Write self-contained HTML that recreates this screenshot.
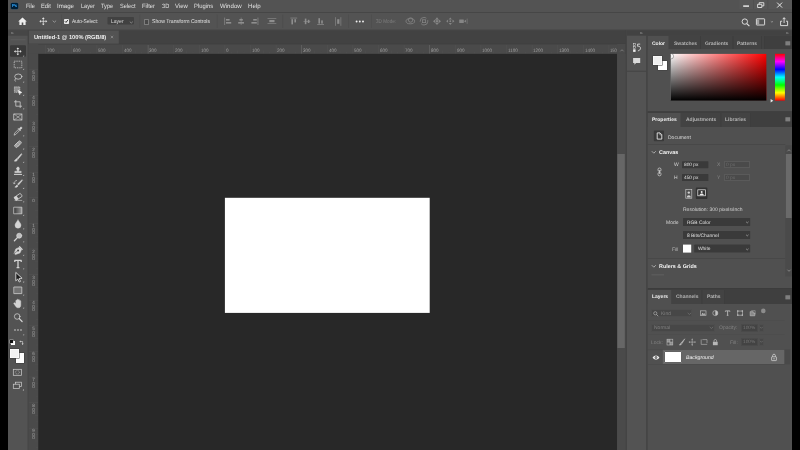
<!DOCTYPE html>
<html><head><meta charset="utf-8"><title>Photoshop</title>
<style>
html,body{margin:0;padding:0;}
body{width:800px;height:450px;background:#000;position:relative;overflow:hidden;font-family:"Liberation Sans",sans-serif;}
#a{position:absolute;left:0;top:0;width:800px;height:450px;will-change:transform;}
#a>div,#a>span,#a>svg{position:absolute;display:block;}
#a>span{white-space:nowrap;}
svg{overflow:visible;}
</style></head><body><div id="a">
<svg style="left:8px;top:0px" width="784" height="450"><rect x="0.00" y="0.00" width="784.00" height="450.00" rx="0" fill="#535353"/></svg>
<svg style="left:8px;top:0px" width="784" height="13"><rect x="0.00" y="0.00" width="784.00" height="12.30" rx="0" fill="#535353"/></svg>
<svg style="left:8px;top:12px" width="784" height="1"><rect x="0.00" y="0.10" width="784.00" height="0.70" rx="0" fill="#3e3e3e"/></svg>
<div style="left:11.1px;top:2.9px;width:7px;height:6.2px;background:#001e36;border-radius:1.2px;box-shadow:0 0 0 0.3px #0b3f66"></div>
<span style="left:12.2px;top:3.8px;font-size:4.4px;color:#31a8ff;line-height:4.4px;transform-origin:0 0;transform:rotate(0.03deg) scaleX(1);font-weight:bold;letter-spacing:-0.1px;">Ps</span>
<span style="left:25.6px;top:2.95px;font-size:6.1px;color:#e0e0e0;line-height:6.1px;transform-origin:0 0;transform:rotate(0.03deg) scaleX(0.9);">File</span>
<span style="left:41.2px;top:2.95px;font-size:6.1px;color:#e0e0e0;line-height:6.1px;transform-origin:0 0;transform:rotate(0.03deg) scaleX(0.95);">Edit</span>
<span style="left:57px;top:2.95px;font-size:6.1px;color:#e0e0e0;line-height:6.1px;transform-origin:0 0;transform:rotate(0.03deg) scaleX(1.0);">Image</span>
<span style="left:80.6px;top:2.95px;font-size:6.1px;color:#e0e0e0;line-height:6.1px;transform-origin:0 0;transform:rotate(0.03deg) scaleX(0.91);">Layer</span>
<span style="left:101px;top:2.95px;font-size:6.1px;color:#e0e0e0;line-height:6.1px;transform-origin:0 0;transform:rotate(0.03deg) scaleX(0.92);">Type</span>
<span style="left:120px;top:2.95px;font-size:6.1px;color:#e0e0e0;line-height:6.1px;transform-origin:0 0;transform:rotate(0.03deg) scaleX(0.92);">Select</span>
<span style="left:141.9px;top:2.95px;font-size:6.1px;color:#e0e0e0;line-height:6.1px;transform-origin:0 0;transform:rotate(0.03deg) scaleX(0.96);">Filter</span>
<span style="left:161.5px;top:2.95px;font-size:6.1px;color:#e0e0e0;line-height:6.1px;transform-origin:0 0;transform:rotate(0.03deg) scaleX(0.93);">3D</span>
<span style="left:175px;top:2.95px;font-size:6.1px;color:#e0e0e0;line-height:6.1px;transform-origin:0 0;transform:rotate(0.03deg) scaleX(0.97);">View</span>
<span style="left:193.7px;top:2.95px;font-size:6.1px;color:#e0e0e0;line-height:6.1px;transform-origin:0 0;transform:rotate(0.03deg) scaleX(0.96);">Plugins</span>
<span style="left:220px;top:2.95px;font-size:6.1px;color:#e0e0e0;line-height:6.1px;transform-origin:0 0;transform:rotate(0.03deg) scaleX(1.0);">Window</span>
<span style="left:247.9px;top:2.95px;font-size:6.1px;color:#e0e0e0;line-height:6.1px;transform-origin:0 0;transform:rotate(0.03deg) scaleX(1.0);">Help</span>
<svg style="left:739px;top:0px" width="53" height="9"><rect x="0.40" y="0.00" width="52.60" height="9.00" rx="0" fill="#575757"/></svg>
<svg style="left:753px;top:0px" width="1" height="9"><rect x="0.40" y="0.00" width="0.60" height="9.00" rx="0" fill="#4c4c4c"/></svg>
<svg style="left:767px;top:0px" width="2" height="9"><rect x="0.60" y="0.00" width="0.60" height="9.00" rx="0" fill="#4c4c4c"/></svg>
<svg style="left:739px;top:0px;" width="53" height="9" viewBox="0 0 53 9"><g stroke="#e6e6e6" fill="none" stroke-width="1">
<path d="M4.2 6.1H10" stroke-width="1.5"/>
<path d="M18.6 4.3h4.2v3.2h-4.2z M20.2 4.2V2.7h4.6v3.2h-1.8" stroke-width="0.9"/>
<path d="M38.1 2.6l5 5M43.1 2.6l-5 5" stroke-width="1"/>
</g></svg>
<svg style="left:8px;top:12px" width="784" height="18"><rect x="0.00" y="0.80" width="784.00" height="17.20" rx="0" fill="#535353"/></svg>
<svg style="left:8px;top:29px" width="784" height="2"><rect x="0.00" y="0.60" width="784.00" height="0.60" rx="0" fill="#444"/></svg>
<svg style="left:17.6px;top:17px;" width="9" height="9" viewBox="0 0 9 9"><path d="M4.5 0.6L0.2 4.4h1.2V8.1h2.3V5.5h1.6V8.1h2.3V4.4h1.2z" fill="#eeeeee"/></svg>
<svg style="left:38px;top:16px;" width="12" height="11" viewBox="0 0 12 11"><g transform="translate(5.3,5.3) scale(0.92)" stroke="#e4e4e4" stroke-width="0.8" fill="#e4e4e4">
<path d="M0 -3V3M-3 0H3" fill="none"/>
<path d="M0 -4.3l-1.5 1.7h3zM0 4.3l-1.5 -1.7h3zM-4.3 0l1.7 -1.5v3zM4.3 0l-1.7 -1.5v3z" stroke="none"/></g></svg>
<svg style="left:51.6px;top:20.2px;" width="5" height="4" viewBox="0 0 5 4"><path d="M0.7 0.7L2.4 2.2 4.1 0.7" stroke="#a4a4a4" stroke-width="0.8" fill="none"/></svg>
<svg style="left:61px;top:14px" width="1" height="14"><rect x="0.00" y="0.50" width="0.60" height="13.50" rx="0" fill="#4b4b4b"/></svg>
<div style="left:64.2px;top:19px;width:4.6px;height:4.6px;border-radius:0.8px;background:#e8e8e8"></div>
<svg style="left:64.2px;top:19px;" width="4.6" height="4.6" viewBox="0 0 4.6 4.6"><path d="M0.9 2.3l1.1 1.1L3.8 1.1" stroke="#2e2e2e" stroke-width="1" fill="none"/></svg>
<span style="left:72.2px;top:19.1px;font-size:5.6px;color:#e0e0e0;line-height:5.6px;transform-origin:0 0;transform:rotate(0.03deg) scaleX(0.86);">Auto-Select:</span>
<svg style="left:107px;top:16px" width="27" height="9"><rect x="0.50" y="0.90" width="26.50" height="7.60" rx="0.8" fill="#414141"/></svg>
<span style="left:111px;top:19.1px;font-size:5.6px;color:#d8d8d8;line-height:5.6px;transform-origin:0 0;transform:rotate(0.03deg) scaleX(0.9);">Layer</span>
<svg style="left:128.8px;top:20.6px;" width="5" height="4" viewBox="0 0 5 4"><path d="M0.8 0.7L2.3 2 3.8 0.7" stroke="#b0b0b0" stroke-width="0.6" fill="none"/></svg>
<svg style="left:139px;top:14px" width="2" height="14"><rect x="0.60" y="0.50" width="0.60" height="13.50" rx="0" fill="#4b4b4b"/></svg>
<div style="left:143.9px;top:19.3px;width:3.5px;height:3.5px;border:0.45px solid #7c7c7c;border-radius:0.6px;background:#474747;box-sizing:content-box"></div>
<span style="left:151.5px;top:19.1px;font-size:5.6px;color:#e0e0e0;line-height:5.6px;transform-origin:0 0;transform:rotate(0.03deg) scaleX(0.92);">Show Transform Controls</span>
<svg style="left:216px;top:14px" width="2" height="14"><rect x="0.80" y="0.50" width="0.60" height="13.50" rx="0" fill="#4b4b4b"/></svg>
<svg style="left:0px;top:0px;pointer-events:none;" width="800" height="30" viewBox="0 0 800 30"><g fill="#8e8e8e"><rect x="224.4" y="17.6" width="0.7" height="7.4"/><rect x="226" y="19" width="3.6" height="1.6"/><rect x="226" y="22" width="5.2" height="1.6"/></g><g fill="#8e8e8e"><rect x="240.8" y="17.6" width="0.6" height="7.4"/><rect x="239.4" y="19" width="3.4" height="1.6"/><rect x="238.2" y="22" width="5.8" height="1.6"/></g><g fill="#8e8e8e"><rect x="257.6" y="17.6" width="0.7" height="7.4"/><rect x="253.2" y="19" width="3.6" height="1.6"/><rect x="251.4" y="22" width="5.4" height="1.6"/></g><g fill="#8e8e8e"><rect x="267.5" y="18.2" width="8.8" height="0.6"/><rect x="267.5" y="23.4" width="8.8" height="0.6"/><rect x="269.3" y="20" width="5.2" height="2.2"/></g><g fill="#8e8e8e"><rect x="290.4" y="17.7" width="6.8" height="0.7"/><rect x="291.4" y="19.2" width="1.6" height="5.2"/><rect x="294.4" y="19.2" width="1.6" height="3.2"/></g><g fill="#8e8e8e"><rect x="303.5" y="21" width="6.8" height="0.6"/><rect x="304.8" y="18.6" width="1.6" height="5.6"/><rect x="307.8" y="19.8" width="1.6" height="3.2"/></g><g fill="#8e8e8e"><rect x="317.2" y="24.3" width="6.8" height="0.7"/><rect x="318.4" y="18.2" width="1.6" height="5.4"/><rect x="321.2" y="20.4" width="1.6" height="3.2"/></g><g fill="#8e8e8e"><rect x="335.2" y="17.2" width="0.6" height="8.6"/><rect x="340.6" y="17.2" width="0.6" height="8.6"/><rect x="337.2" y="19.2" width="2.2" height="4.6"/></g></svg>
<svg style="left:282px;top:14px" width="2" height="14"><rect x="0.50" y="0.50" width="0.60" height="13.50" rx="0" fill="#4b4b4b"/></svg>
<svg style="left:348px;top:14px" width="1" height="14"><rect x="0.00" y="0.50" width="0.60" height="13.50" rx="0" fill="#4b4b4b"/></svg>
<svg style="left:354px;top:19px;" width="12" height="5" viewBox="0 0 12 5"><g fill="#f0f0f0"><circle cx="2.6" cy="2.5" r="0.95"/><circle cx="5.8" cy="2.5" r="0.95"/><circle cx="9" cy="2.5" r="0.95"/></g></svg>
<svg style="left:371px;top:14px" width="1" height="14"><rect x="0.00" y="0.50" width="0.60" height="13.50" rx="0" fill="#4b4b4b"/></svg>
<span style="left:376.3px;top:19.1px;font-size:5.6px;color:#7d7d7d;line-height:5.6px;transform-origin:0 0;transform:rotate(0.03deg) scaleX(0.83);">3D Mode:</span>
<svg style="left:400px;top:14px;" width="72" height="14" viewBox="0 0 72 14"><g stroke="#858585" fill="none" stroke-width="0.8">
<ellipse cx="10.3" cy="7.2" rx="4.3" ry="2.6"/><circle cx="10.6" cy="6" r="2.2"/>
<circle cx="24" cy="7.2" r="3.8" stroke-dasharray="9 2"/><rect x="22.4" y="5.8" width="3.2" height="2.8"/>
</g>
<g fill="#858585"><path d="M37 3.3l2 2.4h-4zM37 11.1l2-2.4h-4zM33 7.2l2.4-2v4zM41 7.2l-2.4-2v4z"/><rect x="36" y="6.2" width="2" height="2"/>
<path d="M50.3 3.5l1.6 1.9h-3.2zM50.3 10.9l1.6-1.9h-3.2zM46.2 7.2l1.9-1.6v3.2zM54.4 7.2l-1.9-1.6v3.2z"/><circle cx="50.3" cy="7.2" r="0.9"/>
<rect x="59.2" y="5.4" width="4.6" height="3.6" rx="0.5"/><path d="M64 7.2l2-1.4v2.8z"/><rect x="66.8" y="4.6" width="0.6" height="5.2"/></g></svg>
<svg style="left:740px;top:15.5px;" width="52" height="12" viewBox="0 0 52 12"><g stroke="#e6e6e6" fill="none" stroke-width="0.9">
<circle cx="4.8" cy="5.6" r="2.7"/><path d="M6.8 7.6l2.6 2.6" stroke-width="1.1"/>
<rect x="16.4" y="2.8" width="8.2" height="6.2" rx="0.4"/>
<path d="M30.8 5.3l1.1 0.9 1.1-0.9" stroke="#bdbdbd" stroke-width="0.6"/>
<path d="M42.2 5.2h-1.6v4.4h7v-4.4H46"/><path d="M44.1 7V1.8M42.7 3.2l1.4-1.5 1.4 1.5"/>
</g><rect x="17" y="3.4" width="2.2" height="5" fill="#a0a0a0"/></svg>
<svg style="left:28px;top:30px" width="598" height="14"><rect x="0.00" y="0.20" width="598.00" height="13.80" rx="0" fill="#424242"/></svg>
<svg style="left:28px;top:30px" width="91" height="14"><rect x="0.80" y="0.60" width="90.00" height="13.40" rx="0" fill="#535353"/></svg>
<span style="left:33.8px;top:34.6px;font-size:5.7px;color:#f0f0f0;line-height:5.7px;transform-origin:0 0;transform:rotate(0.03deg) scaleX(1);font-weight:bold;">Untitled-1 @ 100% (RGB/8)</span>
<svg style="left:109.5px;top:35px;" width="4" height="4" viewBox="0 0 4 4"><path d="M0.8 0.8l2.4 2.4M3.2 0.8L0.8 3.2" stroke="#a0a0a0" stroke-width="0.6"/></svg>
<svg style="left:8px;top:30px" width="20" height="6"><rect x="0.00" y="0.20" width="20.00" height="5.60" rx="0" fill="#464646"/></svg>
<svg style="left:10.8px;top:31.9px;" width="3" height="3" viewBox="0 0 3 3"><path d="M0.3 0.3l0.8 0.8-0.8 0.8M1.5 0.3l0.8 0.8-0.8 0.8" stroke="#b8b8b8" stroke-width="0.5" fill="none"/></svg>
<svg style="left:8px;top:35px" width="20" height="415"><rect x="0.00" y="0.80" width="20.00" height="414.20" rx="0" fill="#535353"/></svg>
<svg style="left:27px;top:30px" width="2" height="421"><rect x="0.60" y="0.20" width="1.20" height="420.00" rx="0" fill="#444"/></svg>
<svg style="left:10px;top:39px" width="16" height="2"><rect x="0.50" y="0.00" width="15.00" height="1.40" rx="0" fill="#5a5a5a"/></svg>
<svg style="left:10px;top:45px" width="16" height="12"><rect x="0.00" y="0.30" width="16.00" height="11.40" rx="1.0" fill="#393939"/></svg>
<svg style="left:0px;top:0px;pointer-events:none;" width="30" height="450" viewBox="0 0 30 450"><g transform="translate(18.0,51.4)" stroke="#d4d4d4" fill="none" stroke-width="0.75" stroke-linecap="round" stroke-linejoin="round"><g transform="translate(-0.2,0) scale(0.88)" stroke="#e4e4e4" stroke-width="0.8" fill="#e4e4e4">
<path d="M0 -3V3M-3 0H3" fill="none"/>
<path d="M0 -4.3l-1.5 1.7h3zM0 4.3l-1.5 -1.7h3zM-4.3 0l1.7 -1.5v3zM4.3 0l-1.7 -1.5v3z" stroke="none"/></g></g><path d="M24.1 56.6h-1.3l1.3-1.3z" fill="#c8c8c8"/><g transform="translate(18.0,64.5)" stroke="#d4d4d4" fill="none" stroke-width="0.75" stroke-linecap="round" stroke-linejoin="round"><rect x="-3.8" y="-3.3" width="7.6" height="6.6" stroke-dasharray="1.3 0.9" stroke-linecap="butt"/></g><path d="M24.1 69.7h-1.3l1.3-1.3z" fill="#c8c8c8"/><g transform="translate(18.0,77.4)" stroke="#d4d4d4" fill="none" stroke-width="0.75" stroke-linecap="round" stroke-linejoin="round"><ellipse cx="0.3" cy="-0.8" rx="3.6" ry="2.6"/><path d="M-2.3 1.2c-1 0.6-1.2 1.8-0.4 2.6"/></g><path d="M24.1 82.60000000000001h-1.3l1.3-1.3z" fill="#c8c8c8"/><g transform="translate(18.0,90.5)" stroke="#d4d4d4" fill="none" stroke-width="0.75" stroke-linecap="round" stroke-linejoin="round"><rect x="-3.6" y="-3.6" width="5.4" height="5.4" stroke-dasharray="1.2 0.7" stroke-linecap="butt" fill="#d4d4d4" fill-opacity="0.45"/><path d="M0.2 -0.2l3.8 2.2-1.6 0.5-0.6 1.6z" fill="#f4f4f4" stroke="#f4f4f4" stroke-width="0.4"/></g><path d="M24.1 95.7h-1.3l1.3-1.3z" fill="#c8c8c8"/><g transform="translate(18.0,104)" stroke="#d4d4d4" fill="none" stroke-width="0.75" stroke-linecap="round" stroke-linejoin="round"><path d="M-2.2 -4v6.2h6.2M-4 -2.2h6.2v6.2" stroke-linecap="butt"/></g><path d="M24.1 109.2h-1.3l1.3-1.3z" fill="#c8c8c8"/><g transform="translate(18.0,117)" stroke="#d4d4d4" fill="none" stroke-width="0.75" stroke-linecap="round" stroke-linejoin="round"><rect x="-3.9" y="-3" width="7.8" height="6"/><path d="M-3.9 -3l7.8 6M3.9 -3l-7.8 6" stroke-width="0.55"/></g><g transform="translate(18.0,131)" stroke="#d4d4d4" fill="none" stroke-width="0.75" stroke-linecap="round" stroke-linejoin="round"><path d="M-3.8 3.8l0.6-1.8 3.4-3.4 1.2 1.2-3.4 3.4z" stroke-width="0.7"/><path d="M0.2 -2.6l2.4 2.4M1.2 -1.8l1.4-2c0.6-0.6 1.8 0.6 1.2 1.2l-2 1.4z" fill="#d4d4d4"/></g><path d="M24.1 136.2h-1.3l1.3-1.3z" fill="#c8c8c8"/><g transform="translate(18.0,144.2)" stroke="#d4d4d4" fill="none" stroke-width="0.75" stroke-linecap="round" stroke-linejoin="round"><g transform="rotate(-45) scale(0.9)"><rect x="-4.2" y="-1.7" width="8.4" height="3.4" rx="1.2" fill="#d4d4d4" fill-opacity="0.55"/><rect x="-1.4" y="-1.7" width="2.8" height="3.4" stroke-width="0.5"/></g></g><path d="M24.1 149.39999999999998h-1.3l1.3-1.3z" fill="#c8c8c8"/><g transform="translate(18.0,157.6)" stroke="#d4d4d4" fill="none" stroke-width="0.75" stroke-linecap="round" stroke-linejoin="round"><path d="M3.2 -3.8l-4.2 4.6 0.9 0.9 3.9-4.9z" fill="#d4d4d4" stroke-width="0.5"/><path d="M-1.4 1.2c-1.3 0-1.1 1.6-2.3 2.2 1.5 0.6 3.3 0 3.1-1.4z" fill="#d4d4d4" stroke-width="0.5"/></g><path d="M24.1 162.79999999999998h-1.3l1.3-1.3z" fill="#c8c8c8"/><g transform="translate(18.0,170.8)" stroke="#d4d4d4" fill="none" stroke-width="0.75" stroke-linecap="round" stroke-linejoin="round"><path d="M-1.4 -2.2c0-2.2 2.8-2.2 2.8 0 0 1-0.7 1.2-0.7 2.6h2.5v1.5h-6.4v-1.5h2.5c0-1.4-0.7-1.6-0.7-2.6z" fill="#d4d4d4" stroke-width="0.4"/><path d="M-3.6 3.6h7.2" stroke-width="1"/></g><path d="M24.1 176.0h-1.3l1.3-1.3z" fill="#c8c8c8"/><g transform="translate(18.0,183.7)" stroke="#d4d4d4" fill="none" stroke-width="0.75" stroke-linecap="round" stroke-linejoin="round"><path d="M3.8 -3.8l-4.2 4.2 0.9 0.9 3.9-4.5z" fill="#d4d4d4" stroke-width="0.5"/><path d="M-0.8 1.4c-1.2 0-1 1.4-2.4 2 1.4 0.5 3.2 0 3-1.2z" fill="#d4d4d4" stroke-width="0.5"/><path d="M-1.4 -3.2a2.4 2.4 0 0 0-2.4 3" stroke-width="0.7"/><path d="M-4.6 -0.8l0.8 1.2 1-1" stroke-width="0.6"/></g><path d="M24.1 188.89999999999998h-1.3l1.3-1.3z" fill="#c8c8c8"/><g transform="translate(18.0,197)" stroke="#d4d4d4" fill="none" stroke-width="0.75" stroke-linecap="round" stroke-linejoin="round"><g transform="rotate(-35)"><rect x="-3.6" y="-1.8" width="7.6" height="3.6" rx="0.5"/><rect x="-3.6" y="-1.8" width="3" height="3.6" fill="#d4d4d4" stroke="none"/></g><path d="M-3 3.4h6.8" stroke-width="0.6"/></g><path d="M24.1 202.2h-1.3l1.3-1.3z" fill="#c8c8c8"/><defs><linearGradient id="gg" x1="0" x2="1"><stop offset="0" stop-color="#3c3c3c"/><stop offset="1" stop-color="#9c9c9c"/></linearGradient></defs><g transform="translate(18.0,210.5)" stroke="#d4d4d4" fill="none" stroke-width="0.75" stroke-linecap="round" stroke-linejoin="round"><rect x="-3.9" y="-3.3" width="7.8" height="6.6" fill="url(#gg)" stroke-width="0.7"/></g><path d="M24.1 215.7h-1.3l1.3-1.3z" fill="#c8c8c8"/><g transform="translate(18.0,224)" stroke="#d4d4d4" fill="none" stroke-width="0.75" stroke-linecap="round" stroke-linejoin="round"><path d="M0 -4c1.6 2.4 3 3.6 3 5.2a3 3 0 0 1-6 0c0-1.6 1.4-2.8 3-5.2z" fill="#d4d4d4" stroke-width="0.4"/></g><path d="M24.1 229.2h-1.3l1.3-1.3z" fill="#c8c8c8"/><g transform="translate(18.0,237)" stroke="#d4d4d4" fill="none" stroke-width="0.75" stroke-linecap="round" stroke-linejoin="round"><circle cx="1.2" cy="-1.3" r="2.5" fill="#d4d4d4" fill-opacity="0.85"/><path d="M-0.6 0.6l-3 3.2" stroke-width="1.3"/></g><path d="M24.1 242.2h-1.3l1.3-1.3z" fill="#c8c8c8"/><g transform="translate(18.0,250.5)" stroke="#d4d4d4" fill="none" stroke-width="0.75" stroke-linecap="round" stroke-linejoin="round"><path d="M-3.8 2.6l1.6-4.2 3.6-1.6 2.2 2.2-1.6 3.4-4.4 1.6z" fill="#d4d4d4" stroke-width="0.5"/><circle cx="0.1" cy="0.1" r="1" fill="#444" stroke="none"/><path d="M-3.6 2.6l3-2" stroke="#444" stroke-width="0.5"/><path d="M1.6 -3.8l2.6 2.6" stroke-width="1.1"/></g><path d="M24.1 255.7h-1.3l1.3-1.3z" fill="#c8c8c8"/><g transform="translate(18.0,264)" stroke="#d4d4d4" fill="none" stroke-width="0.75" stroke-linecap="round" stroke-linejoin="round"><path d="M-3.2 -1.9v-1.7h6.4v1.7M0 -3.6v7.2M-1.4 3.6h2.8" stroke-width="1.3" stroke-linecap="butt"/></g><path d="M24.1 269.2h-1.3l1.3-1.3z" fill="#c8c8c8"/><g transform="translate(18.0,277.2)" stroke="#d4d4d4" fill="none" stroke-width="0.75" stroke-linecap="round" stroke-linejoin="round"><path d="M-2.2 -4.4v8l2-1.8 1.4 3 1.3-0.6-1.4-2.9 2.6-0.2z" fill="#1e1e1e" stroke="#ececec" stroke-width="0.8"/></g><path d="M24.1 282.4h-1.3l1.3-1.3z" fill="#c8c8c8"/><g transform="translate(18.0,290.3)" stroke="#d4d4d4" fill="none" stroke-width="0.75" stroke-linecap="round" stroke-linejoin="round"><rect x="-3.8" y="-3.3" width="7.6" height="6.6" fill="#d4d4d4" fill-opacity="0.25"/></g><path d="M24.1 295.5h-1.3l1.3-1.3z" fill="#c8c8c8"/><g transform="translate(18.0,303.4)" stroke="#d4d4d4" fill="none" stroke-width="0.75" stroke-linecap="round" stroke-linejoin="round"><path transform="translate(0.4,0)" d="M-2.6 0.4v-3c0-0.9 1.2-0.9 1.2 0v-0.9c0-0.9 1.3-0.9 1.3 0v0.4c0-0.9 1.3-0.9 1.3 0v0.9c0-0.8 1.2-0.8 1.2 0v4c0 1.6-1 2.6-2.6 2.6-1.4 0-2-0.6-2.8-1.8l-1.6-2.4c-0.4-0.8 0.6-1.3 1.2-0.6z" fill="#d4d4d4" stroke-width="0.4"/></g><path d="M24.1 308.59999999999997h-1.3l1.3-1.3z" fill="#c8c8c8"/><g transform="translate(18.0,317.4)" stroke="#d4d4d4" fill="none" stroke-width="0.75" stroke-linecap="round" stroke-linejoin="round"><circle cx="-0.8" cy="-0.9" r="2.8"/><path d="M1.3 1.3l2.8 2.8" stroke-width="1.2"/></g><g transform="translate(18.0,330)" stroke="#d4d4d4" fill="none" stroke-width="0.75" stroke-linecap="round" stroke-linejoin="round"><g fill="#d4d4d4" stroke="none"><circle cx="-3" cy="0" r="0.8"/><circle cx="0" cy="0" r="0.8"/><circle cx="3" cy="0" r="0.8"/></g></g><path d="M24.1 335.2h-1.3l1.3-1.3z" fill="#c8c8c8"/></svg>
<div style="left:11.4px;top:341.4px;width:3.2px;height:3.2px;background:#fff;"></div>
<div style="left:10px;top:340px;width:3.2px;height:3.2px;background:#111;box-shadow:0 0 0 0.4px #ccc"></div>
<svg style="left:18.5px;top:339.5px;" width="6" height="6" viewBox="0 0 6 6"><path d="M1.2 1.5h2.4v2.6" stroke="#ddd" stroke-width="0.6" fill="none"/><path d="M0.4 1.5l1.3-1v2zM3.6 4.9l-1-1.3h2z" fill="#ddd"/></svg>
<div style="left:15.6px;top:353.4px;width:8.8px;height:9.2px;background:#fff;box-shadow:0 0 0 0.5px #3c3c3c;"></div>
<div style="left:10.1px;top:348.9px;width:9.2px;height:9.2px;background:#f2f2f2;box-shadow:0 0 0 0.5px #3c3c3c, inset 0 0 0 0.6px #fff;"></div>
<svg style="left:12px;top:368px;" width="12" height="9" viewBox="0 0 12 9"><rect x="1.3" y="1.3" width="8.2" height="6" stroke="#d0d0d0" stroke-width="0.7" fill="none"/><ellipse cx="5.4" cy="4.3" rx="2" ry="1.7" stroke="#d8d8d8" stroke-width="0.5" stroke-dasharray="0.8 0.6" fill="none"/></svg>
<svg style="left:12px;top:380px;" width="13" height="11" viewBox="0 0 13 11"><rect x="3.6" y="2.2" width="6" height="4.4" stroke="#d0d0d0" stroke-width="0.7" fill="none"/><rect x="1.3" y="4.2" width="6" height="4.4" stroke="#d0d0d0" stroke-width="0.7" fill="#535353"/><path d="M12 10.4h-1.4l1.4-1.4z" fill="#c8c8c8"/></svg>
<svg style="left:28px;top:44px" width="598" height="10"><rect x="0.80" y="0.00" width="597.00" height="9.80" rx="0" fill="#4a4a4a"/></svg>
<svg style="left:28px;top:53px" width="11" height="397"><rect x="0.80" y="0.80" width="9.40" height="396.20" rx="0" fill="#4a4a4a"/></svg>
<svg style="left:28px;top:43px" width="598" height="2"><rect x="0.80" y="0.70" width="596.60" height="0.60" rx="0" fill="#3e3e3e"/></svg>
<svg style="left:0px;top:0px;pointer-events:none;" width="640" height="450" viewBox="0 0 640 450"><rect x="45.40" y="45" width="0.6" height="8.8" fill="#535353"/><rect x="51.85" y="51.8" width="0.5" height="2" fill="#515151"/><rect x="58.25" y="50.6" width="0.5" height="3.2" fill="#515151"/><rect x="64.65" y="51.8" width="0.5" height="2" fill="#515151"/><rect x="71.00" y="45" width="0.6" height="8.8" fill="#535353"/><rect x="77.45" y="51.8" width="0.5" height="2" fill="#515151"/><rect x="83.85" y="50.6" width="0.5" height="3.2" fill="#515151"/><rect x="90.25" y="51.8" width="0.5" height="2" fill="#515151"/><rect x="96.60" y="45" width="0.6" height="8.8" fill="#535353"/><rect x="103.05" y="51.8" width="0.5" height="2" fill="#515151"/><rect x="109.45" y="50.6" width="0.5" height="3.2" fill="#515151"/><rect x="115.85" y="51.8" width="0.5" height="2" fill="#515151"/><rect x="122.20" y="45" width="0.6" height="8.8" fill="#535353"/><rect x="128.65" y="51.8" width="0.5" height="2" fill="#515151"/><rect x="135.05" y="50.6" width="0.5" height="3.2" fill="#515151"/><rect x="141.45" y="51.8" width="0.5" height="2" fill="#515151"/><rect x="147.80" y="45" width="0.6" height="8.8" fill="#6c6c6c"/><rect x="154.25" y="51.8" width="0.5" height="2" fill="#515151"/><rect x="160.65" y="50.6" width="0.5" height="3.2" fill="#515151"/><rect x="167.05" y="51.8" width="0.5" height="2" fill="#515151"/><rect x="173.40" y="45" width="0.6" height="8.8" fill="#535353"/><rect x="179.85" y="51.8" width="0.5" height="2" fill="#515151"/><rect x="186.25" y="50.6" width="0.5" height="3.2" fill="#515151"/><rect x="192.65" y="51.8" width="0.5" height="2" fill="#515151"/><rect x="199.00" y="45" width="0.6" height="8.8" fill="#535353"/><rect x="205.45" y="51.8" width="0.5" height="2" fill="#515151"/><rect x="211.85" y="50.6" width="0.5" height="3.2" fill="#515151"/><rect x="218.25" y="51.8" width="0.5" height="2" fill="#515151"/><rect x="224.60" y="45" width="0.6" height="8.8" fill="#535353"/><rect x="231.05" y="51.8" width="0.5" height="2" fill="#515151"/><rect x="237.45" y="50.6" width="0.5" height="3.2" fill="#515151"/><rect x="243.85" y="51.8" width="0.5" height="2" fill="#515151"/><rect x="250.20" y="45" width="0.6" height="8.8" fill="#535353"/><rect x="256.65" y="51.8" width="0.5" height="2" fill="#515151"/><rect x="263.05" y="50.6" width="0.5" height="3.2" fill="#515151"/><rect x="269.45" y="51.8" width="0.5" height="2" fill="#515151"/><rect x="275.80" y="45" width="0.6" height="8.8" fill="#535353"/><rect x="282.25" y="51.8" width="0.5" height="2" fill="#515151"/><rect x="288.65" y="50.6" width="0.5" height="3.2" fill="#515151"/><rect x="295.05" y="51.8" width="0.5" height="2" fill="#515151"/><rect x="301.40" y="45" width="0.6" height="8.8" fill="#6c6c6c"/><rect x="307.85" y="51.8" width="0.5" height="2" fill="#515151"/><rect x="314.25" y="50.6" width="0.5" height="3.2" fill="#515151"/><rect x="320.65" y="51.8" width="0.5" height="2" fill="#515151"/><rect x="327.00" y="45" width="0.6" height="8.8" fill="#535353"/><rect x="333.45" y="51.8" width="0.5" height="2" fill="#515151"/><rect x="339.85" y="50.6" width="0.5" height="3.2" fill="#515151"/><rect x="346.25" y="51.8" width="0.5" height="2" fill="#515151"/><rect x="352.60" y="45" width="0.6" height="8.8" fill="#535353"/><rect x="359.05" y="51.8" width="0.5" height="2" fill="#515151"/><rect x="365.45" y="50.6" width="0.5" height="3.2" fill="#515151"/><rect x="371.85" y="51.8" width="0.5" height="2" fill="#515151"/><rect x="378.20" y="45" width="0.6" height="8.8" fill="#535353"/><rect x="384.65" y="51.8" width="0.5" height="2" fill="#515151"/><rect x="391.05" y="50.6" width="0.5" height="3.2" fill="#515151"/><rect x="397.45" y="51.8" width="0.5" height="2" fill="#515151"/><rect x="403.80" y="45" width="0.6" height="8.8" fill="#535353"/><rect x="410.25" y="51.8" width="0.5" height="2" fill="#515151"/><rect x="416.65" y="50.6" width="0.5" height="3.2" fill="#515151"/><rect x="423.05" y="51.8" width="0.5" height="2" fill="#515151"/><rect x="429.40" y="45" width="0.6" height="8.8" fill="#6c6c6c"/><rect x="435.85" y="51.8" width="0.5" height="2" fill="#515151"/><rect x="442.25" y="50.6" width="0.5" height="3.2" fill="#515151"/><rect x="448.65" y="51.8" width="0.5" height="2" fill="#515151"/><rect x="455.00" y="45" width="0.6" height="8.8" fill="#535353"/><rect x="461.45" y="51.8" width="0.5" height="2" fill="#515151"/><rect x="467.85" y="50.6" width="0.5" height="3.2" fill="#515151"/><rect x="474.25" y="51.8" width="0.5" height="2" fill="#515151"/><rect x="480.60" y="45" width="0.6" height="8.8" fill="#535353"/><rect x="487.05" y="51.8" width="0.5" height="2" fill="#515151"/><rect x="493.45" y="50.6" width="0.5" height="3.2" fill="#515151"/><rect x="499.85" y="51.8" width="0.5" height="2" fill="#515151"/><rect x="506.20" y="45" width="0.6" height="8.8" fill="#535353"/><rect x="512.65" y="51.8" width="0.5" height="2" fill="#515151"/><rect x="519.05" y="50.6" width="0.5" height="3.2" fill="#515151"/><rect x="525.45" y="51.8" width="0.5" height="2" fill="#515151"/><rect x="531.80" y="45" width="0.6" height="8.8" fill="#535353"/><rect x="538.25" y="51.8" width="0.5" height="2" fill="#515151"/><rect x="544.65" y="50.6" width="0.5" height="3.2" fill="#515151"/><rect x="551.05" y="51.8" width="0.5" height="2" fill="#515151"/><rect x="557.40" y="45" width="0.6" height="8.8" fill="#535353"/><rect x="563.85" y="51.8" width="0.5" height="2" fill="#515151"/><rect x="570.25" y="50.6" width="0.5" height="3.2" fill="#515151"/><rect x="576.65" y="51.8" width="0.5" height="2" fill="#515151"/><rect x="583.00" y="45" width="0.6" height="8.8" fill="#535353"/><rect x="589.45" y="51.8" width="0.5" height="2" fill="#515151"/><rect x="595.85" y="50.6" width="0.5" height="3.2" fill="#515151"/><rect x="602.25" y="51.8" width="0.5" height="2" fill="#515151"/><rect x="608.60" y="45" width="0.6" height="8.8" fill="#535353"/><rect x="615.05" y="51.8" width="0.5" height="2" fill="#515151"/><rect x="29.2" y="69.50" width="8.8" height="0.6" fill="#535353"/><rect x="36" y="75.95" width="2" height="0.5" fill="#515151"/><rect x="34.8" y="82.35" width="3.2" height="0.5" fill="#515151"/><rect x="36" y="88.75" width="2" height="0.5" fill="#515151"/><rect x="29.2" y="95.10" width="8.8" height="0.6" fill="#535353"/><rect x="36" y="101.55" width="2" height="0.5" fill="#515151"/><rect x="34.8" y="107.95" width="3.2" height="0.5" fill="#515151"/><rect x="36" y="114.35" width="2" height="0.5" fill="#515151"/><rect x="29.2" y="120.70" width="8.8" height="0.6" fill="#535353"/><rect x="36" y="127.15" width="2" height="0.5" fill="#515151"/><rect x="34.8" y="133.55" width="3.2" height="0.5" fill="#515151"/><rect x="36" y="139.95" width="2" height="0.5" fill="#515151"/><rect x="29.2" y="146.30" width="8.8" height="0.6" fill="#535353"/><rect x="36" y="152.75" width="2" height="0.5" fill="#515151"/><rect x="34.8" y="159.15" width="3.2" height="0.5" fill="#515151"/><rect x="36" y="165.55" width="2" height="0.5" fill="#515151"/><rect x="29.2" y="171.90" width="8.8" height="0.6" fill="#535353"/><rect x="36" y="178.35" width="2" height="0.5" fill="#515151"/><rect x="34.8" y="184.75" width="3.2" height="0.5" fill="#515151"/><rect x="36" y="191.15" width="2" height="0.5" fill="#515151"/><rect x="29.2" y="197.50" width="8.8" height="0.6" fill="#535353"/><rect x="36" y="203.95" width="2" height="0.5" fill="#515151"/><rect x="34.8" y="210.35" width="3.2" height="0.5" fill="#515151"/><rect x="36" y="216.75" width="2" height="0.5" fill="#515151"/><rect x="29.2" y="223.10" width="8.8" height="0.6" fill="#535353"/><rect x="36" y="229.55" width="2" height="0.5" fill="#515151"/><rect x="34.8" y="235.95" width="3.2" height="0.5" fill="#515151"/><rect x="36" y="242.35" width="2" height="0.5" fill="#515151"/><rect x="29.2" y="248.70" width="8.8" height="0.6" fill="#535353"/><rect x="36" y="255.15" width="2" height="0.5" fill="#515151"/><rect x="34.8" y="261.55" width="3.2" height="0.5" fill="#515151"/><rect x="36" y="267.95" width="2" height="0.5" fill="#515151"/><rect x="29.2" y="274.30" width="8.8" height="0.6" fill="#535353"/><rect x="36" y="280.75" width="2" height="0.5" fill="#515151"/><rect x="34.8" y="287.15" width="3.2" height="0.5" fill="#515151"/><rect x="36" y="293.55" width="2" height="0.5" fill="#515151"/><rect x="29.2" y="299.90" width="8.8" height="0.6" fill="#535353"/><rect x="36" y="306.35" width="2" height="0.5" fill="#515151"/><rect x="34.8" y="312.75" width="3.2" height="0.5" fill="#515151"/><rect x="36" y="319.15" width="2" height="0.5" fill="#515151"/><rect x="29.2" y="325.50" width="8.8" height="0.6" fill="#535353"/><rect x="36" y="331.95" width="2" height="0.5" fill="#515151"/><rect x="34.8" y="338.35" width="3.2" height="0.5" fill="#515151"/><rect x="36" y="344.75" width="2" height="0.5" fill="#515151"/><rect x="29.2" y="351.10" width="8.8" height="0.6" fill="#535353"/><rect x="36" y="357.55" width="2" height="0.5" fill="#515151"/><rect x="34.8" y="363.95" width="3.2" height="0.5" fill="#515151"/><rect x="36" y="370.35" width="2" height="0.5" fill="#515151"/><rect x="29.2" y="376.70" width="8.8" height="0.6" fill="#535353"/><rect x="36" y="383.15" width="2" height="0.5" fill="#515151"/><rect x="34.8" y="389.55" width="3.2" height="0.5" fill="#515151"/><rect x="36" y="395.95" width="2" height="0.5" fill="#515151"/><rect x="29.2" y="402.30" width="8.8" height="0.6" fill="#535353"/><rect x="36" y="408.75" width="2" height="0.5" fill="#515151"/><rect x="34.8" y="415.15" width="3.2" height="0.5" fill="#515151"/><rect x="36" y="421.55" width="2" height="0.5" fill="#515151"/><rect x="29.2" y="427.90" width="8.8" height="0.6" fill="#535353"/><rect x="36" y="434.35" width="2" height="0.5" fill="#515151"/><rect x="34.8" y="440.75" width="3.2" height="0.5" fill="#515151"/><rect x="36" y="447.15" width="2" height="0.5" fill="#515151"/></svg>
<span style="left:46.89999999999999px;top:49.0px;font-size:4.9px;color:#a0a0a0;line-height:4.9px;transform-origin:0 0;transform:rotate(0.03deg) scaleX(0.93);">700</span>
<span style="left:72.49999999999999px;top:49.0px;font-size:4.9px;color:#a0a0a0;line-height:4.9px;transform-origin:0 0;transform:rotate(0.03deg) scaleX(0.93);">600</span>
<span style="left:98.10000000000001px;top:49.0px;font-size:4.9px;color:#a0a0a0;line-height:4.9px;transform-origin:0 0;transform:rotate(0.03deg) scaleX(0.93);">500</span>
<span style="left:123.7px;top:49.0px;font-size:4.9px;color:#a0a0a0;line-height:4.9px;transform-origin:0 0;transform:rotate(0.03deg) scaleX(0.93);">400</span>
<span style="left:149.29999999999998px;top:49.0px;font-size:4.9px;color:#a0a0a0;line-height:4.9px;transform-origin:0 0;transform:rotate(0.03deg) scaleX(0.93);">300</span>
<span style="left:174.89999999999998px;top:49.0px;font-size:4.9px;color:#a0a0a0;line-height:4.9px;transform-origin:0 0;transform:rotate(0.03deg) scaleX(0.93);">200</span>
<span style="left:200.5px;top:49.0px;font-size:4.9px;color:#a0a0a0;line-height:4.9px;transform-origin:0 0;transform:rotate(0.03deg) scaleX(0.93);">100</span>
<span style="left:226.1px;top:49.0px;font-size:4.9px;color:#a0a0a0;line-height:4.9px;transform-origin:0 0;transform:rotate(0.03deg) scaleX(0.93);">0</span>
<span style="left:251.7px;top:49.0px;font-size:4.9px;color:#a0a0a0;line-height:4.9px;transform-origin:0 0;transform:rotate(0.03deg) scaleX(0.93);">100</span>
<span style="left:277.3px;top:49.0px;font-size:4.9px;color:#a0a0a0;line-height:4.9px;transform-origin:0 0;transform:rotate(0.03deg) scaleX(0.93);">200</span>
<span style="left:302.90000000000003px;top:49.0px;font-size:4.9px;color:#a0a0a0;line-height:4.9px;transform-origin:0 0;transform:rotate(0.03deg) scaleX(0.93);">300</span>
<span style="left:328.5px;top:49.0px;font-size:4.9px;color:#a0a0a0;line-height:4.9px;transform-origin:0 0;transform:rotate(0.03deg) scaleX(0.93);">400</span>
<span style="left:354.09999999999997px;top:49.0px;font-size:4.9px;color:#a0a0a0;line-height:4.9px;transform-origin:0 0;transform:rotate(0.03deg) scaleX(0.93);">500</span>
<span style="left:379.7px;top:49.0px;font-size:4.9px;color:#a0a0a0;line-height:4.9px;transform-origin:0 0;transform:rotate(0.03deg) scaleX(0.93);">600</span>
<span style="left:405.3px;top:49.0px;font-size:4.9px;color:#a0a0a0;line-height:4.9px;transform-origin:0 0;transform:rotate(0.03deg) scaleX(0.93);">700</span>
<span style="left:430.90000000000003px;top:49.0px;font-size:4.9px;color:#a0a0a0;line-height:4.9px;transform-origin:0 0;transform:rotate(0.03deg) scaleX(0.93);">800</span>
<span style="left:456.5px;top:49.0px;font-size:4.9px;color:#a0a0a0;line-height:4.9px;transform-origin:0 0;transform:rotate(0.03deg) scaleX(0.93);">900</span>
<span style="left:482.09999999999997px;top:49.0px;font-size:4.9px;color:#a0a0a0;line-height:4.9px;transform-origin:0 0;transform:rotate(0.03deg) scaleX(0.93);">1000</span>
<span style="left:507.7px;top:49.0px;font-size:4.9px;color:#a0a0a0;line-height:4.9px;transform-origin:0 0;transform:rotate(0.03deg) scaleX(0.93);">1100</span>
<span style="left:533.3000000000001px;top:49.0px;font-size:4.9px;color:#a0a0a0;line-height:4.9px;transform-origin:0 0;transform:rotate(0.03deg) scaleX(0.93);">1200</span>
<span style="left:558.9000000000001px;top:49.0px;font-size:4.9px;color:#a0a0a0;line-height:4.9px;transform-origin:0 0;transform:rotate(0.03deg) scaleX(0.93);">1300</span>
<span style="left:584.5000000000001px;top:49.0px;font-size:4.9px;color:#a0a0a0;line-height:4.9px;transform-origin:0 0;transform:rotate(0.03deg) scaleX(0.93);">1400</span>
<span style="left:610.1px;top:49.0px;font-size:4.9px;color:#a0a0a0;line-height:4.9px;transform-origin:0 0;transform:rotate(0.03deg) scaleX(0.84);">150</span>
<span style="left:31.7px;top:70.80px;font-size:4.6px;line-height:3.65px;color:#a2a2a2;white-space:normal;width:3px;word-break:break-all;text-align:center;transform:rotate(0.03deg);">5<br>0<br>0</span>
<span style="left:31.7px;top:96.40px;font-size:4.6px;line-height:3.65px;color:#a2a2a2;white-space:normal;width:3px;word-break:break-all;text-align:center;transform:rotate(0.03deg);">4<br>0<br>0</span>
<span style="left:31.7px;top:122.00px;font-size:4.6px;line-height:3.65px;color:#a2a2a2;white-space:normal;width:3px;word-break:break-all;text-align:center;transform:rotate(0.03deg);">3<br>0<br>0</span>
<span style="left:31.7px;top:147.60px;font-size:4.6px;line-height:3.65px;color:#a2a2a2;white-space:normal;width:3px;word-break:break-all;text-align:center;transform:rotate(0.03deg);">2<br>0<br>0</span>
<span style="left:31.7px;top:173.20px;font-size:4.6px;line-height:3.65px;color:#a2a2a2;white-space:normal;width:3px;word-break:break-all;text-align:center;transform:rotate(0.03deg);">1<br>0<br>0</span>
<span style="left:31.7px;top:198.80px;font-size:4.6px;line-height:3.65px;color:#a2a2a2;white-space:normal;width:3px;word-break:break-all;text-align:center;transform:rotate(0.03deg);">0</span>
<span style="left:31.7px;top:224.40px;font-size:4.6px;line-height:3.65px;color:#a2a2a2;white-space:normal;width:3px;word-break:break-all;text-align:center;transform:rotate(0.03deg);">1<br>0<br>0</span>
<span style="left:31.7px;top:250.00px;font-size:4.6px;line-height:3.65px;color:#a2a2a2;white-space:normal;width:3px;word-break:break-all;text-align:center;transform:rotate(0.03deg);">2<br>0<br>0</span>
<span style="left:31.7px;top:275.60px;font-size:4.6px;line-height:3.65px;color:#a2a2a2;white-space:normal;width:3px;word-break:break-all;text-align:center;transform:rotate(0.03deg);">3<br>0<br>0</span>
<span style="left:31.7px;top:301.20px;font-size:4.6px;line-height:3.65px;color:#a2a2a2;white-space:normal;width:3px;word-break:break-all;text-align:center;transform:rotate(0.03deg);">4<br>0<br>0</span>
<span style="left:31.7px;top:326.80px;font-size:4.6px;line-height:3.65px;color:#a2a2a2;white-space:normal;width:3px;word-break:break-all;text-align:center;transform:rotate(0.03deg);">5<br>0<br>0</span>
<span style="left:31.7px;top:352.40px;font-size:4.6px;line-height:3.65px;color:#a2a2a2;white-space:normal;width:3px;word-break:break-all;text-align:center;transform:rotate(0.03deg);">6<br>0<br>0</span>
<span style="left:31.7px;top:378.00px;font-size:4.6px;line-height:3.65px;color:#a2a2a2;white-space:normal;width:3px;word-break:break-all;text-align:center;transform:rotate(0.03deg);">7<br>0<br>0</span>
<span style="left:31.7px;top:403.60px;font-size:4.6px;line-height:3.65px;color:#a2a2a2;white-space:normal;width:3px;word-break:break-all;text-align:center;transform:rotate(0.03deg);">8<br>0<br>0</span>
<span style="left:31.7px;top:429.20px;font-size:4.6px;line-height:3.65px;color:#a2a2a2;white-space:normal;width:3px;word-break:break-all;text-align:center;transform:rotate(0.03deg);">9<br>0<br>0</span>
<svg style="left:28px;top:44px" width="11" height="10"><rect x="0.80" y="0.00" width="9.40" height="9.80" rx="0" fill="#4a4a4a"/></svg>
<svg style="left:38px;top:53px" width="580" height="397"><rect x="0.20" y="0.80" width="579.00" height="396.20" rx="0" fill="#282828"/></svg>
<svg style="left:224px;top:197px" width="206" height="116"><rect x="0.90" y="0.80" width="204.80" height="115.10" rx="0" fill="#ffffff"/></svg>
<svg style="left:617px;top:44px" width="9" height="406"><rect x="0.20" y="0.00" width="8.00" height="406.00" rx="0" fill="#4a4a4a"/></svg>
<svg style="left:617px;top:44px" width="9" height="10"><rect x="0.20" y="0.00" width="8.00" height="9.80" rx="0" fill="#4a4a4a"/></svg>
<svg style="left:619.5px;top:48.5px;" width="4" height="3" viewBox="0 0 4 3"><path d="M0.4 2.3L2 0.7l1.6 1.6" stroke="#9a9a9a" stroke-width="0.6" fill="none"/></svg>
<svg style="left:617px;top:154px" width="8" height="194"><rect x="0.40" y="0.00" width="7.40" height="194.00" rx="0" fill="#666666"/></svg>
<svg style="left:625px;top:30px" width="2" height="421"><rect x="0.40" y="0.20" width="1.40" height="420.00" rx="0" fill="#414141"/></svg>
<svg style="left:627px;top:30px" width="165" height="6"><rect x="0.00" y="0.20" width="165.00" height="5.60" rx="0" fill="#424242"/></svg>
<svg style="left:640.2px;top:31.9px;" width="3" height="3" viewBox="0 0 3 3"><path d="M0.3 0.3l0.8 0.8-0.8 0.8M1.5 0.3l0.8 0.8-0.8 0.8" stroke="#b8b8b8" stroke-width="0.5" fill="none"/></svg>
<svg style="left:786.4px;top:31.9px;" width="3" height="3" viewBox="0 0 3 3"><path d="M0.3 0.3l0.8 0.8-0.8 0.8M1.5 0.3l0.8 0.8-0.8 0.8" stroke="#b8b8b8" stroke-width="0.5" fill="none"/></svg>
<svg style="left:627px;top:35px" width="20" height="415"><rect x="0.00" y="0.80" width="19.20" height="414.20" rx="0" fill="#535353"/></svg>
<svg style="left:627px;top:70px" width="20" height="2"><rect x="0.00" y="0.80" width="19.20" height="0.80" rx="0" fill="#3f3f3f"/></svg>
<svg style="left:646px;top:35px" width="2" height="415"><rect x="0.30" y="0.80" width="1.40" height="414.20" rx="0" fill="#414141"/></svg>
<svg style="left:631px;top:41.9px;" width="12" height="12" viewBox="0 0 12 12"><g fill="none" stroke="#e2e2e2" stroke-width="0.5"><rect x="2.4" y="1.4" width="1.9" height="1.9"/><rect x="2.4" y="4.4" width="1.9" height="1.9"/></g><rect x="2.1" y="7.3" width="2.5" height="2.6" fill="#ececec"/>
<path d="M9.2 2.1H6.6v2.2c1.6-0.3 2.9 0.4 2.9 2 0 1.3-1 2.2-2.6 2.6" stroke="#e2e2e2" stroke-width="0.85" fill="none"/></svg>
<svg style="left:631px;top:56.4px;" width="12" height="12" viewBox="0 0 12 12"><path d="M2.1 2h7.1v5H5.1L3.4 8.8V7H2.1z" fill="#dadada"/></svg>
<svg style="left:647px;top:35px" width="145" height="15"><rect x="0.80" y="0.80" width="144.20" height="13.40" rx="0" fill="#3f3f3f"/></svg>
<svg style="left:647px;top:36px" width="22" height="14"><rect x="0.80" y="0.00" width="21.00" height="13.20" rx="0" fill="#505050"/></svg>
<svg style="left:668px;top:36px" width="97" height="14"><rect x="0.80" y="0.00" width="95.80" height="13.20" rx="0" fill="#434343"/></svg>
<span style="left:652px;top:41px;font-size:5px;color:#f2f2f2;line-height:5px;transform-origin:0 0;transform:rotate(0.03deg) scaleX(1);font-weight:bold;">Color</span>
<span style="left:673.6px;top:41px;font-size:5px;color:#b6b6b6;line-height:5px;transform-origin:0 0;transform:rotate(0.03deg) scaleX(1);font-weight:bold;">Swatches</span>
<span style="left:705px;top:41px;font-size:5px;color:#b6b6b6;line-height:5px;transform-origin:0 0;transform:rotate(0.03deg) scaleX(1);font-weight:bold;">Gradients</span>
<span style="left:737px;top:41px;font-size:5px;color:#b6b6b6;line-height:5px;transform-origin:0 0;transform:rotate(0.03deg) scaleX(1);font-weight:bold;">Patterns</span>
<svg style="left:700px;top:36px" width="1" height="14"><rect x="0.40" y="0.00" width="0.60" height="13.20" rx="0" fill="#3b3b3b"/></svg>
<svg style="left:732px;top:36px" width="2" height="14"><rect x="0.70" y="0.00" width="0.60" height="13.20" rx="0" fill="#3b3b3b"/></svg>
<svg style="left:761px;top:36px" width="1" height="14"><rect x="0.20" y="0.00" width="0.60" height="13.20" rx="0" fill="#3b3b3b"/></svg>
<svg style="left:764px;top:36px" width="1" height="14"><rect x="0.40" y="0.00" width="0.60" height="13.20" rx="0" fill="#3b3b3b"/></svg>
<svg style="left:784.8px;top:40.6px;" width="6" height="5" viewBox="0 0 6 5"><g fill="#b8b8b8"><rect x="0.4" y="0.6" width="4.8" height="0.6"/><rect x="0.4" y="1.6" width="4.8" height="0.6"/><rect x="0.4" y="2.6" width="4.8" height="0.6"/><rect x="0.4" y="3.6" width="4.8" height="0.6"/></g></svg>
<svg style="left:647px;top:49px" width="145" height="63"><rect x="0.80" y="0.20" width="144.20" height="62.00" rx="0" fill="#505050"/></svg>
<div style="left:658.2px;top:61.3px;width:8.8px;height:9.2px;background:#fff;box-shadow:0 0 0 0.5px #3c3c3c;"></div>
<div style="left:653px;top:56.3px;width:8.6px;height:8.8px;background:#f0f0f0;box-shadow:0 0 0 0.5px #3c3c3c, inset 0 0 0 0.6px #fff;"></div>
<svg style="left:660px;top:50px;" width="140" height="56" viewBox="0 0 140 56"><defs><linearGradient id="cf1" x1="0" x2="1" y1="0" y2="0"><stop offset="0" stop-color="#fff"/><stop offset="1" stop-color="#f00"/></linearGradient>
<linearGradient id="cf2" x1="0" x2="0" y1="0" y2="1"><stop offset="0" stop-color="#000" stop-opacity="0"/><stop offset="1" stop-color="#000"/></linearGradient>
<linearGradient id="hue" x1="0" x2="0" y1="0" y2="1"><stop offset="0" stop-color="#f00"/><stop offset="0.167" stop-color="#f0f"/><stop offset="0.333" stop-color="#00f"/><stop offset="0.5" stop-color="#0ff"/><stop offset="0.667" stop-color="#0f0"/><stop offset="0.833" stop-color="#ff0"/><stop offset="1" stop-color="#f00"/></linearGradient>
<clipPath id="cfc"><rect x="10.7" y="3.8" width="95.7" height="46.8"/></clipPath></defs>
<rect x="10.8" y="3.9" width="95.5" height="46.2" fill="url(#cf1)"/><rect x="10.7" y="3.8" width="95.7" height="46.8" fill="url(#cf2)"/>
<g clip-path="url(#cfc)"><circle cx="10.9" cy="6.2" r="2.1" stroke="#fff" stroke-width="0.8" fill="none"/><circle cx="10.9" cy="6.2" r="2.7" stroke="#222" stroke-width="0.35" fill="none"/></g>
<rect x="115" y="3.8" width="9.9" height="46.8" fill="url(#hue)"/>
<path d="M110.6 49l2.7 1.8-2.7 1.8z" fill="#e8e8e8"/></svg>
<svg style="left:647px;top:111px" width="145" height="2"><rect x="0.80" y="0.20" width="144.20" height="1.60" rx="0" fill="#3c3c3c"/></svg>
<svg style="left:647px;top:112px" width="145" height="15"><rect x="0.80" y="0.80" width="144.20" height="14.20" rx="0" fill="#3f3f3f"/></svg>
<svg style="left:647px;top:113px" width="34" height="14"><rect x="0.80" y="0.00" width="33.00" height="14.00" rx="0" fill="#505050"/></svg>
<svg style="left:680px;top:113px" width="71" height="14"><rect x="0.80" y="0.00" width="70.00" height="14.00" rx="0" fill="#434343"/></svg>
<span style="left:652px;top:116.9px;font-size:5px;color:#f2f2f2;line-height:5px;transform-origin:0 0;transform:rotate(0.03deg) scaleX(1);font-weight:bold;">Properties</span>
<span style="left:686px;top:116.9px;font-size:5px;color:#b6b6b6;line-height:5px;transform-origin:0 0;transform:rotate(0.03deg) scaleX(1);font-weight:bold;">Adjustments</span>
<span style="left:725.4px;top:116.9px;font-size:5px;color:#b6b6b6;line-height:5px;transform-origin:0 0;transform:rotate(0.03deg) scaleX(1);font-weight:bold;">Libraries</span>
<svg style="left:720px;top:113px" width="2" height="14"><rect x="0.60" y="0.00" width="0.60" height="14.00" rx="0" fill="#3b3b3b"/></svg>
<svg style="left:750px;top:113px" width="1" height="14"><rect x="0.20" y="0.00" width="0.60" height="14.00" rx="0" fill="#3b3b3b"/></svg>
<svg style="left:784.8px;top:117.4px;" width="6" height="5" viewBox="0 0 6 5"><g fill="#b8b8b8"><rect x="0.4" y="0.6" width="4.8" height="0.6"/><rect x="0.4" y="1.6" width="4.8" height="0.6"/><rect x="0.4" y="2.6" width="4.8" height="0.6"/><rect x="0.4" y="3.6" width="4.8" height="0.6"/></g></svg>
<svg style="left:647px;top:127px" width="145" height="161"><rect x="0.80" y="0.00" width="144.20" height="161.00" rx="0" fill="#505050"/></svg>
<svg style="left:653px;top:130px" width="11" height="12"><rect x="0.80" y="0.60" width="10.20" height="10.60" rx="0.8" fill="#3a3a3a"/></svg>
<svg style="left:655.5px;top:132px;" width="7" height="8" viewBox="0 0 7 8"><path d="M1.2 0.9h2.8l1.8 1.8v4.4H1.2z" stroke="#f2f2f2" stroke-width="0.85" fill="none"/><path d="M3.9 0.9v2h2" stroke="#ececec" stroke-width="0.5" fill="none"/></svg>
<span style="left:667.7px;top:134.6px;font-size:5px;color:#dcdcdc;line-height:5px;transform-origin:0 0;transform:rotate(0.03deg) scaleX(1);">Document</span>
<svg style="left:647px;top:144px" width="139" height="1"><rect x="0.80" y="0.00" width="137.50" height="0.60" rx="0" fill="#444"/></svg>
<svg style="left:651px;top:149.8px;" width="6" height="5" viewBox="0 0 6 5"><path d="M0.8 1.2l2 2 2-2" stroke="#d0d0d0" stroke-width="0.7" fill="none"/></svg>
<span style="left:659.0px;top:149.7px;font-size:5.4px;color:#f0f0f0;line-height:5.4px;transform-origin:0 0;transform:rotate(0.03deg) scaleX(1);font-weight:bold;">Canvas</span>
<span style="left:674px;top:162.2px;font-size:5px;color:#d4d4d4;line-height:5px;transform-origin:0 0;transform:rotate(0.03deg) scaleX(1);">W</span>
<svg style="left:682px;top:161px" width="27" height="8"><rect x="0.00" y="0.20" width="26.40" height="7.00" rx="0.6" fill="#3a3a3a"/></svg>
<span style="left:684.2px;top:163.1px;font-size:4.8px;color:#e0e0e0;line-height:4.8px;transform-origin:0 0;transform:rotate(0.03deg) scaleX(1);">800 px</span>
<span style="left:717px;top:162.2px;font-size:5px;color:#8a8a8a;line-height:5px;transform-origin:0 0;transform:rotate(0.03deg) scaleX(1);">X</span>
<div style="left:723.6px;top:161.2px;width:26.6px;height:6.6px;border:0.4px solid #5a5a5a;background:#4a4a4a;box-sizing:border-box;"></div>
<span style="left:725.8px;top:163.0px;font-size:4.8px;color:#6e6e6e;line-height:4.8px;transform-origin:0 0;transform:rotate(0.03deg) scaleX(1);">0 px</span>
<span style="left:674.4px;top:175.2px;font-size:5px;color:#d4d4d4;line-height:5px;transform-origin:0 0;transform:rotate(0.03deg) scaleX(1);">H</span>
<svg style="left:682px;top:174px" width="27" height="8"><rect x="0.00" y="0.10" width="26.40" height="7.00" rx="0.6" fill="#3a3a3a"/></svg>
<span style="left:684.2px;top:176.1px;font-size:4.8px;color:#e0e0e0;line-height:4.8px;transform-origin:0 0;transform:rotate(0.03deg) scaleX(1);">450 px</span>
<span style="left:717px;top:175.2px;font-size:5px;color:#8a8a8a;line-height:5px;transform-origin:0 0;transform:rotate(0.03deg) scaleX(1);">Y</span>
<div style="left:723.6px;top:174.1px;width:26.6px;height:6.6px;border:0.4px solid #5a5a5a;background:#4a4a4a;box-sizing:border-box;"></div>
<span style="left:725.8px;top:176.0px;font-size:4.8px;color:#6e6e6e;line-height:4.8px;transform-origin:0 0;transform:rotate(0.03deg) scaleX(1);">0 px</span>
<svg style="left:656px;top:166.5px;" width="7" height="10" viewBox="0 0 7 10"><g stroke="#d8d8d8" stroke-width="0.7" fill="none"><rect x="2" y="1" width="3" height="3.4" rx="1.4"/><rect x="2" y="5.4" width="3" height="3.4" rx="1.4"/><path d="M3.5 3v4"/></g></svg>
<svg style="left:685px;top:188.5px;" width="8" height="10" viewBox="0 0 8 10"><rect x="0.8" y="0.6" width="6" height="8.6" stroke="#d0d0d0" stroke-width="0.6" fill="none"/><circle cx="3.8" cy="3.6" r="1.2" fill="#d0d0d0"/><path d="M1.8 8.6c0-3 4-3 4 0z" fill="#d0d0d0"/></svg>
<svg style="left:695px;top:187px" width="13" height="12"><rect x="0.80" y="0.60" width="11.60" height="11.40" rx="0.8" fill="#333"/></svg>
<svg style="left:697px;top:189.4px;" width="10" height="8" viewBox="0 0 10 8"><rect x="0.8" y="0.8" width="7.8" height="6" stroke="#ececec" stroke-width="0.7" fill="none"/><circle cx="4.7" cy="3" r="1" fill="#ececec"/><path d="M2.6 6.2c0-2.4 4.2-2.4 4.2 0z" fill="#ececec"/></svg>
<span style="left:682.6px;top:206.6px;font-size:5px;color:#d4d4d4;line-height:5px;transform-origin:0 0;transform:rotate(0.03deg) scaleX(1);">Resolution: 300 pixels/inch</span>
<span style="left:666px;top:219.6px;font-size:5px;color:#d4d4d4;line-height:5px;transform-origin:0 0;transform:rotate(0.03deg) scaleX(1);">Mode</span>
<svg style="left:683px;top:218px" width="68" height="8"><rect x="0.00" y="0.00" width="67.20" height="8.00" rx="0.6" fill="#3a3a3a"/></svg>
<span style="left:686.9px;top:220.7px;font-size:4.9px;color:#e0e0e0;line-height:4.9px;transform-origin:0 0;transform:rotate(0.03deg) scaleX(1);">RGB Color</span>
<svg style="left:744.8000000000001px;top:221.1px;" width="5" height="4" viewBox="0 0 5 4"><path d="M1.1 0.8L2.3 1.9 3.5 0.8" stroke="#c0c0c0" stroke-width="0.6" fill="none"/></svg>
<svg style="left:683px;top:231px" width="68" height="8"><rect x="0.00" y="0.00" width="67.20" height="8.00" rx="0.6" fill="#3a3a3a"/></svg>
<span style="left:686.9px;top:233.7px;font-size:4.9px;color:#e0e0e0;line-height:4.9px;transform-origin:0 0;transform:rotate(0.03deg) scaleX(1);">8 Bits/Channel</span>
<svg style="left:744.8000000000001px;top:234.1px;" width="5" height="4" viewBox="0 0 5 4"><path d="M1.1 0.8L2.3 1.9 3.5 0.8" stroke="#c0c0c0" stroke-width="0.6" fill="none"/></svg>
<span style="left:672px;top:246.6px;font-size:5px;color:#b4b4b4;line-height:5px;transform-origin:0 0;transform:rotate(0.03deg) scaleX(1);">Fill</span>
<svg style="left:683px;top:244px" width="9" height="9"><rect x="0.00" y="0.60" width="8.20" height="8.00" rx="0" fill="#fff"/></svg>
<svg style="left:694px;top:244px" width="57" height="9"><rect x="0.20" y="0.60" width="56.00" height="8.00" rx="0.6" fill="#3a3a3a"/></svg>
<span style="left:698.1px;top:247.29999999999998px;font-size:4.9px;color:#e0e0e0;line-height:4.9px;transform-origin:0 0;transform:rotate(0.03deg) scaleX(1);">White</span>
<svg style="left:744.8000000000001px;top:247.7px;" width="5" height="4" viewBox="0 0 5 4"><path d="M1.1 0.8L2.3 1.9 3.5 0.8" stroke="#c0c0c0" stroke-width="0.6" fill="none"/></svg>
<svg style="left:647px;top:258px" width="139" height="1"><rect x="0.80" y="0.00" width="137.50" height="0.60" rx="0" fill="#444"/></svg>
<svg style="left:651px;top:264.2px;" width="6" height="5" viewBox="0 0 6 5"><path d="M0.8 1.2l2 2 2-2" stroke="#d0d0d0" stroke-width="0.7" fill="none"/></svg>
<span style="left:659.0px;top:264.2px;font-size:5.4px;color:#f0f0f0;line-height:5.4px;transform-origin:0 0;transform:rotate(0.03deg) scaleX(1);font-weight:bold;">Rulers &amp; Grids</span>
<svg style="left:651px;top:274px" width="13" height="2"><rect x="0.50" y="0.60" width="12.50" height="0.60" rx="0" fill="#6a6a6a"/></svg>
<svg style="left:785px;top:145px" width="7" height="132"><rect x="0.40" y="0.40" width="6.60" height="131.00" rx="0" fill="#4a4a4a"/></svg>
<svg style="left:786.7px;top:148.6px;" width="4" height="3" viewBox="0 0 4 3"><path d="M0.4 2.3L2 0.7l1.6 1.6" stroke="#aaa" stroke-width="0.6" fill="none"/></svg>
<svg style="left:785px;top:154px" width="7" height="64"><rect x="0.80" y="0.00" width="5.80" height="64.00" rx="0" fill="#6a6a6a"/></svg>
<svg style="left:786.7px;top:269px;" width="4" height="3" viewBox="0 0 4 3"><path d="M0.4 0.7L2 2.3l1.6-1.6" stroke="#aaa" stroke-width="0.6" fill="none"/></svg>
<svg style="left:647px;top:288px" width="145" height="2"><rect x="0.80" y="0.00" width="144.20" height="1.80" rx="0" fill="#3c3c3c"/></svg>
<svg style="left:647px;top:289px" width="145" height="15"><rect x="0.80" y="0.80" width="144.20" height="14.20" rx="0" fill="#3f3f3f"/></svg>
<svg style="left:647px;top:290px" width="25" height="14"><rect x="0.80" y="0.00" width="23.80" height="14.00" rx="0" fill="#505050"/></svg>
<svg style="left:671px;top:290px" width="54" height="14"><rect x="0.60" y="0.00" width="53.00" height="14.00" rx="0" fill="#434343"/></svg>
<span style="left:651.6px;top:294px;font-size:5px;color:#f2f2f2;line-height:5px;transform-origin:0 0;transform:rotate(0.03deg) scaleX(1);font-weight:bold;">Layers</span>
<span style="left:676.3px;top:294px;font-size:5px;color:#b6b6b6;line-height:5px;transform-origin:0 0;transform:rotate(0.03deg) scaleX(1);font-weight:bold;">Channels</span>
<span style="left:707px;top:294px;font-size:5px;color:#b6b6b6;line-height:5px;transform-origin:0 0;transform:rotate(0.03deg) scaleX(1);font-weight:bold;">Paths</span>
<svg style="left:701px;top:290px" width="2" height="14"><rect x="0.60" y="0.00" width="0.60" height="14.00" rx="0" fill="#3b3b3b"/></svg>
<svg style="left:724px;top:290px" width="1" height="14"><rect x="0.00" y="0.00" width="0.60" height="14.00" rx="0" fill="#3b3b3b"/></svg>
<svg style="left:784.8px;top:294.6px;" width="6" height="5" viewBox="0 0 6 5"><g fill="#b8b8b8"><rect x="0.4" y="0.6" width="4.8" height="0.6"/><rect x="0.4" y="1.6" width="4.8" height="0.6"/><rect x="0.4" y="2.6" width="4.8" height="0.6"/><rect x="0.4" y="3.6" width="4.8" height="0.6"/></g></svg>
<svg style="left:647px;top:304px" width="145" height="146"><rect x="0.80" y="0.00" width="144.20" height="146.00" rx="0" fill="#505050"/></svg>
<div style="left:651px;top:309.3px;width:41px;height:8px;border:0.4px solid #4e4e4e;background:#474747;box-sizing:border-box;border-radius:0.6px"></div>
<svg style="left:653px;top:310.6px;" width="6" height="6" viewBox="0 0 6 6"><circle cx="2.3" cy="2.3" r="1.6" stroke="#bdbdbd" stroke-width="0.6" fill="none"/><path d="M3.5 3.5l1.7 1.7" stroke="#bdbdbd" stroke-width="0.7"/></svg>
<span style="left:661px;top:311.2px;font-size:5px;color:#808080;line-height:5px;transform-origin:0 0;transform:rotate(0.03deg) scaleX(1);">Kind</span>
<svg style="left:686.5px;top:311.8px;" width="5" height="4" viewBox="0 0 5 4"><path d="M0.7 0.9L2.4 2.5 4.1 0.9" stroke="#7c7c7c" stroke-width="0.6" fill="none"/></svg>
<svg style="left:698px;top:307px;" width="72" height="12" viewBox="0 0 72 12"><g stroke="#c2c2c2" stroke-width="0.7" fill="none"><g transform="translate(5.3,6.1) scale(0.9) translate(-5.3,-6.1)"><rect x="2.3" y="3.6" width="6" height="5"/><path d="M3 7.8l1.6-2 1.2 1.2 0.8-0.8 1.2 1.6z" fill="#c2c2c2" stroke="none"/></g><g transform="translate(17.3,6.1) scale(0.9) translate(-17.3,-6.1)"><circle cx="17.3" cy="6.1" r="2.8"/><path d="M17.3 3.3a2.8 2.8 0 0 1 0 5.6z" fill="#c2c2c2" stroke="none"/></g><g transform="translate(29.6,6.1) scale(0.82) translate(-29.6,-6.1)"><path d="M26.9 4.4v-1h5.4v1M29.6 3.4v5.4M28.6 8.8h2" stroke-width="1"/></g><g transform="translate(42.1,6.1) scale(0.86) translate(-42.1,-6.1)"><rect x="39.4" y="3.7" width="5.4" height="4.8"/><g fill="#c2c2c2" stroke="none"><rect x="38.6" y="2.9" width="1.5" height="1.5"/><rect x="44" y="2.9" width="1.5" height="1.5"/><rect x="38.6" y="7.7" width="1.5" height="1.5"/><rect x="44" y="7.7" width="1.5" height="1.5"/></g></g><g transform="translate(54.4,6.2) scale(0.86) translate(-54.4,-6.2)"><path d="M51.8 4.4h3.6v1.6h1.8v3.2h-5.4z" fill="#c2c2c2" fill-opacity="0.5"/><path d="M53 3.2h4.6v4.4" stroke-width="0.5"/></g></g><circle cx="65.3" cy="3.9" r="2.3" fill="#8c8c8c"/></svg>
<svg style="left:647px;top:320px" width="138" height="1"><rect x="0.80" y="0.20" width="136.60" height="0.50" rx="0" fill="#4a4a4a"/></svg>
<svg style="left:647px;top:334px" width="138" height="1"><rect x="0.80" y="0.40" width="136.60" height="0.50" rx="0" fill="#4a4a4a"/></svg>
<div style="left:651px;top:323.5px;width:63.6px;height:8px;border:0.4px solid #4e4e4e;background:#474747;box-sizing:border-box;border-radius:0.6px"></div>
<span style="left:653.8px;top:325.3px;font-size:5px;color:#828282;line-height:5px;transform-origin:0 0;transform:rotate(0.03deg) scaleX(1);">Normal</span>
<svg style="left:708.5px;top:326px;" width="5" height="4" viewBox="0 0 5 4"><path d="M0.7 0.9L2.4 2.5 4.1 0.9" stroke="#7c7c7c" stroke-width="0.6" fill="none"/></svg>
<span style="left:718.6px;top:325.3px;font-size:5px;color:#828282;line-height:5px;transform-origin:0 0;transform:rotate(0.03deg) scaleX(1);">Opacity:</span>
<div style="left:740.5px;top:323.5px;width:17px;height:8px;border:0.4px solid #4a4a4a;background:#434343;box-sizing:border-box;"></div>
<span style="left:742.6px;top:325.9px;font-size:4.8px;color:#767676;line-height:4.8px;transform-origin:0 0;transform:rotate(0.03deg) scaleX(1);">100%</span>
<div style="left:759px;top:323.5px;width:5.4px;height:8px;border:0.4px solid #4e4e4e;background:#474747;box-sizing:border-box;"></div>
<svg style="left:759.3px;top:326px;" width="5" height="4" viewBox="0 0 5 4"><path d="M1 0.9L2.4 2.3 3.8 0.9" stroke="#7c7c7c" stroke-width="0.5" fill="none"/></svg>
<span style="left:651px;top:339.6px;font-size:5px;color:#828282;line-height:5px;transform-origin:0 0;transform:rotate(0.03deg) scaleX(1);">Lock:</span>
<svg style="left:664px;top:336px;" width="58" height="12" viewBox="0 0 58 12"><g stroke="#b8b8b8" stroke-width="0.6" fill="none">
<rect x="3" y="3.2" width="5.8" height="5.8"/><path d="M5.9 3.2v5.8M3 6.1h5.8"/><rect x="3" y="3.2" width="2.9" height="2.9" fill="#b8b8b8" fill-opacity="0.6" stroke="none"/><rect x="5.9" y="6.1" width="2.9" height="2.9" fill="#b8b8b8" fill-opacity="0.6" stroke="none"/>
<path d="M20.8 2.8l-3.6 4 0.8 0.8z" fill="#b8b8b8"/><path d="M16.8 7.2c-1 0.2-0.8 1.4-1.8 1.8 1.2 0.4 2.6 0 2.6-1.2z" fill="#b8b8b8" stroke-width="0.3"/>
<path d="M28.2 2.9v6.4M25 6.1h6.4"/><path d="M28.2 2.5l-0.9 1.1h1.8zM28.2 9.7l-0.9-1.1h1.8zM24.6 6.1l1.1-0.9v1.8zM31.8 6.1l-1.1-0.9v1.8z" fill="#b8b8b8" stroke="none"/>
<path d="M37.2 3.4v5h6M38.4 3.6h4.6v3.6" />
<rect x="48.9" y="5.8" width="4.8" height="3.4" fill="#b8b8b8" stroke="none"/><path d="M50 5.8v-1c0-1.8 2.6-1.8 2.6 0v1" stroke-width="0.75"/>
</g></svg>
<span style="left:730.2px;top:339.6px;font-size:5px;color:#828282;line-height:5px;transform-origin:0 0;transform:rotate(0.03deg) scaleX(1);">Fill:</span>
<div style="left:740.5px;top:337.8px;width:17px;height:8px;border:0.4px solid #4a4a4a;background:#434343;box-sizing:border-box;"></div>
<span style="left:742.6px;top:340.2px;font-size:4.8px;color:#767676;line-height:4.8px;transform-origin:0 0;transform:rotate(0.03deg) scaleX(1);">100%</span>
<div style="left:759px;top:337.8px;width:5.4px;height:8px;border:0.4px solid #4e4e4e;background:#474747;box-sizing:border-box;"></div>
<svg style="left:759.3px;top:340.3px;" width="5" height="4" viewBox="0 0 5 4"><path d="M1 0.9L2.4 2.3 3.8 0.9" stroke="#7c7c7c" stroke-width="0.5" fill="none"/></svg>
<svg style="left:647px;top:349px" width="138" height="2"><rect x="0.80" y="0.60" width="136.60" height="0.50" rx="0" fill="#464646"/></svg>
<svg style="left:662px;top:349px" width="123" height="15"><rect x="0.80" y="0.80" width="121.60" height="14.20" rx="0" fill="#666666"/></svg>
<svg style="left:784px;top:349px" width="7" height="16"><rect x="0.60" y="0.40" width="5.80" height="15.00" rx="0" fill="#494949"/></svg>
<svg style="left:647px;top:364px" width="138" height="1"><rect x="0.80" y="0.00" width="136.60" height="0.50" rx="0" fill="#464646"/></svg>
<svg style="left:651.5px;top:354px;" width="8" height="7" viewBox="0 0 8 7"><path d="M0.6 3.5c1.6-2.8 5.2-2.8 6.8 0-1.6 2.8-5.2 2.8-6.8 0z" fill="#efefef"/><circle cx="4" cy="3.5" r="1.3" fill="#444"/><circle cx="4" cy="3.5" r="0.5" fill="#efefef"/></svg>
<div style="left:665px;top:352.2px;width:16.4px;height:9.8px;background:#fff;box-shadow:0 0 0 0.5px #3a3a3a, 0 0 0 1px #8c8c8c;"></div>
<span style="left:686px;top:355px;font-size:5.2px;color:#f2f2f2;line-height:5.2px;transform-origin:0 0;transform:rotate(0.03deg) scaleX(1);font-style:italic;">Background</span>
<svg style="left:770px;top:353px;" width="8" height="9" viewBox="0 0 8 9"><rect x="1.6" y="3.8" width="4.8" height="3.8" rx="0.5" stroke="#dcdcdc" stroke-width="0.7" fill="none"/><path d="M2.6 3.8v-1.2c0-1.9 2.8-1.9 2.8 0v1.2" stroke="#dcdcdc" stroke-width="0.7" fill="none"/><rect x="3.6" y="5" width="0.8" height="1.4" fill="#dcdcdc"/></svg>
</div></body></html>
